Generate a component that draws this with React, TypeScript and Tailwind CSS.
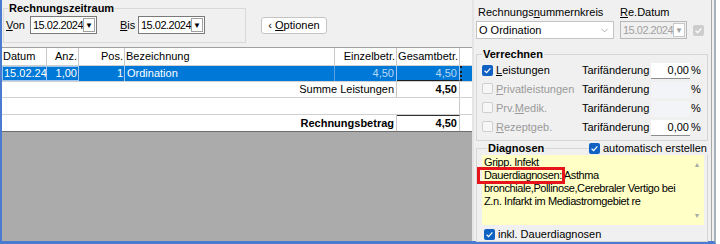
import { ChevronDown } from "lucide-react";

function Check({ state }: { state: "on" | "off" | "dis-on" }) {
  if (state === "off") {
    return (
      <span className="inline-block h-[11px] w-[11px] shrink-0 rounded-[2px] border border-[#cfcfcf] bg-[#f7f7f7]" />
    );
  }
  const fill = state === "on" ? "#0f62c4" : "#cdcdcd";
  return (
    <svg width="11" height="11" viewBox="0 0 11 11" className="shrink-0">
      <rect x="0" y="0" width="11" height="11" rx="2" fill={fill} />
      <path d="M2.6 5.8 L4.6 7.7 L8.4 3.4" fill="none" stroke="white" strokeWidth="1.2" />
    </svg>
  );
}

function DateBox({ value, disabled }: { value: string; disabled?: boolean }) {
  return (
    <div
      className={`flex h-[18px] w-[67px] items-center border ${
        disabled ? "border-[#b8b8b8] bg-[#f0f0f0] text-[#a0a0a0]" : "border-[#7a7a7a] bg-white"
      }`}
    >
      <span className="flex-1 whitespace-nowrap pl-[2px] tracking-[-0.5px]">{value}</span>
      <span
        className={`mr-[1px] flex h-[14px] w-[12px] items-center justify-center border ${
          disabled ? "border-[#c8c8c8] text-[#a0a0a0]" : "border-[#a0a0a0] text-black"
        } bg-white text-[8px]`}
      >
        ▼
      </span>
    </div>
  );
}

function Row({
  label,
  u,
  checked,
  value,
}: {
  label: string;
  u: number;
  checked: boolean;
  value?: string;
}) {
  const a = label.slice(0, u);
  const b = label.slice(u, u + 1);
  const c = label.slice(u + 1);
  return (
    <div className="flex h-[19px] items-center">
      <span className="ml-[5px]">
        <Check state={checked ? "on" : "off"} />
      </span>
      <span className={`ml-[3px] w-[86px] ${checked ? "text-black" : "text-[#9a9a9a]"}`}>
        {a}
        <span className="underline">{b}</span>
        {c}
      </span>
      <span className="w-[69px]">Tarifänderung</span>
      <span
        className={`flex h-[16px] w-[39px] items-center justify-end pr-[1px] ${
          value ? "border-b border-[#8c8c8c] bg-white" : "bg-[#f2f4f7]"
        }`}
      >
        {value}
      </span>
      <span className="ml-[1px]">%</span>
    </div>
  );
}

export default function App() {
  const cols = [45, 32, 46, 210, 62, 63];
  return (
    <div className="h-[244px] w-[720px] overflow-hidden bg-white font-['Liberation_Sans',Arial,sans-serif] text-[11px] leading-[13px] text-black">
      <div className="flex h-[244px] w-[716px] border-b-[3px] border-l-2 border-r-2 border-b-[#4a7bd0] border-l-[#4a7bd0] border-r-[#a9b1bd] bg-[#f0f0f0]">
        {/* left side */}
        <div className="flex w-[470px] flex-col">
          <div className="flex h-[47px] items-start">
            <fieldset className="ml-[1px] mt-[2px] h-[41px] w-[243px] border border-[#d9d9d9] px-[2px]">
              <legend className="ml-[2px] px-[1px] font-bold">Rechnungszeitraum</legend>
              <div className="mt-[1px] flex items-center">
                <span className="w-[24px]">
                  <span className="underline">V</span>on
                </span>
                <DateBox value="15.02.2024" />
                <span className="ml-[23px] w-[18px]">
                  <span className="underline">B</span>is
                </span>
                <DateBox value="15.02.2024" />
              </div>
            </fieldset>
            <button className="ml-[15px] mt-[17px] flex h-[17px] w-[66px] items-center justify-center rounded-[3px] border border-[#c4c4c4] bg-white">
              ‹&nbsp;<span className="underline">O</span>ptionen
            </button>
          </div>

          {/* table */}
          <div className="flex h-[19px] border-b border-t border-b-[#d0d0d0] border-t-[#a0a0a0] bg-white">
            {["Datum", "Anz.", "Pos.", "Bezeichnung", "Einzelbetr.", "Gesamtbetr."].map((h, i) => (
              <div
                key={h}
                style={{ width: cols[i] }}
                className={`flex items-center border-r border-[#c8c8c8] px-[1px] ${
                  i === 0 || i === 3 ? "justify-start" : "justify-end"
                }`}
              >
                {h}
              </div>
            ))}
            <div className="w-[12px]" />
          </div>

          <div className="flex h-[16px] border-b border-[#d0d0d0] bg-[#0078d7] text-white">
            <div className="flex w-[45px] items-center border border-[#9fc6ef] pl-[1px]">15.02.24</div>
            <div className="flex w-[32px] items-center justify-end border border-l-0 border-[#9fc6ef] pr-[1px]">1,00</div>
            <div className="flex w-[46px] items-center justify-end border-r border-[#9fc6ef] pr-[1px]">1</div>
            <div className="flex w-[210px] items-center border-r border-[#5aa2e4] pl-[2px]">Ordination</div>
            <div className="flex w-[62px] items-center justify-end border-r border-[#9fc6ef] pr-[2px] text-[#b9d8f5]">4,50</div>
            <div className="flex w-[63px] items-center justify-end border-b border-r border-b-[#202020] border-r-[#9fc6ef] pr-[2px] text-[#b9d8f5]">4,50</div>
            <div className="w-[12px] border-l-2 border-dotted border-[#1a1a1a]" />
          </div>

          <div className="flex h-[16px] border-b border-[#d0d0d0] bg-white">
            <div className="flex w-[395px] items-center justify-end border-r border-[#c8c8c8] pr-[2px]">Summe Leistungen</div>
            <div className="flex w-[63px] items-center justify-end border-r border-[#c8c8c8] pr-[2px] font-bold">4,50</div>
            <div className="w-[12px]" />
          </div>

          <div className="flex h-[17px] border-b border-[#d0d0d0] bg-white">
            <div className="w-[458px] border-r border-[#c8c8c8]" />
            <div className="w-[12px]" />
          </div>

          <div className="flex h-[17px] border-b border-[#6e6e6e] bg-white">
            <div className="flex w-[395px] items-center justify-end border-r border-[#c8c8c8] pr-[2px] font-bold">Rechnungsbetrag</div>
            <div className="flex w-[63px] items-center justify-end border-r border-t border-r-[#c8c8c8] border-t-[#303030] pr-[2px] font-bold">4,50</div>
            <div className="w-[12px]" />
          </div>

          <div className="flex-1 bg-[#ababab]" />
        </div>

        {/* right side */}
        <div className="flex w-[240px] flex-col border-l-2 border-l-[#e4e4e4] border-r border-r-[#a8a8a8]">
          <div className="mt-[6px] flex">
            <span className="ml-[4px] w-[142px]">
              Rechnungs<span className="underline">n</span>ummernkreis
            </span>
            <span>
              <span className="underline">R</span>e.Datum
            </span>
          </div>
          <div className="mt-[2px] flex items-center">
            <div className="ml-[2px] flex h-[18px] w-[138px] items-center justify-between border border-[#c4c4c4] bg-white pl-[2px] pr-[3px]">
              <span>O Ordination</span>
              <ChevronDown size={11} strokeWidth={1.3} className="text-[#7a7a7a]" />
            </div>
            <span className="ml-[6px]">
              <DateBox value="15.02.2024" disabled />
            </span>
            <span className="ml-[6px]">
              <Check state="dis-on" />
            </span>
          </div>

          <fieldset className="ml-[2px] mt-[9px] w-[232px] border border-[#d6d6d6] pb-[3px]">
            <legend className="ml-[5px] px-[1px] font-bold">Verrechnen</legend>
            <Row label="Leistungen" u={0} checked value="0,00" />
            <Row label="Privatleistungen" u={0} checked={false} />
            <Row label="Prv.Medik." u={4} checked={false} />
            <Row label="Rezeptgeb." u={0} checked={false} value="0,00" />
          </fieldset>

          <fieldset className="relative ml-[2px] mt-[1px] w-[232px] flex-1 border border-[#d6d6d6] pl-[5px] pr-[3px]">
            <legend className="ml-[5px] px-[1px] font-bold">Diagnosen</legend>
            <div className="absolute -top-[13px] left-[112px] flex items-center gap-[3px] whitespace-nowrap bg-[#f0f0f0] pr-[2px]">
              <Check state="on" />
              <span>automatisch erstellen</span>
            </div>
            <div className="flex h-[70px] bg-[#ffffc6]">
              <div className="flex-1 whitespace-nowrap pl-[2px] pt-[1px] tracking-[-0.4px]">
                <div>Gripp. Infekt</div>
                <div>
                  <span className="relative">
                    Dauerdiagnosen:
                    <span className="absolute -bottom-[3px] -left-[7px] -right-[3px] -top-[2px] border-[3px] border-[#e8141c]" />
                  </span>{" "}
                  Asthma
                </div>
                <div>bronchiale,Pollinose,Cerebraler Vertigo bei</div>
                <div>Z.n. Infarkt im Mediastromgebiet re</div>
              </div>
              <div className="flex w-[14px] flex-col items-center justify-between py-[3px] text-[7px] text-[#a8a8a8]">
                <span>▲</span>
                <span>▼</span>
              </div>
            </div>
            <div className="mt-[3px] flex items-center gap-[3px] pl-[2px]">
              <Check state="on" />
              <span>inkl. Dauerdiagnosen</span>
            </div>
          </fieldset>
        </div>
      </div>
    </div>
  );
}
